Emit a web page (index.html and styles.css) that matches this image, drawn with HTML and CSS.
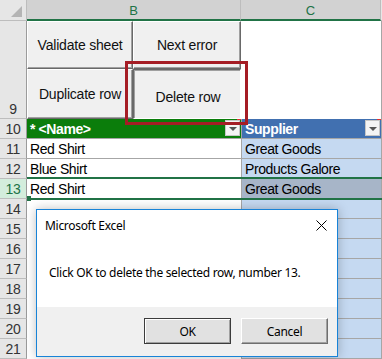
FILE: index.html
```html
<!DOCTYPE html>
<html lang="en">
<head>
  <meta charset="UTF-8" />
  <title>Delete row</title>
  <link rel="stylesheet" href="styles.css">
</head>
<body>
  <div class="screen">
    <div class="sheet">
      <!-- column headers -->
      <div class="corner"><span class="corner-tri"></span></div>
      <div class="col-head sel">B</div>
      <div class="col-head sel">C</div>
      <div class="col-head rest"></div>

      <!-- row 9 : macro buttons -->
      <div class="row-head tall">9</div>
      <div class="cell buttons">
        <div class="xl-btn">Validate sheet</div>
        <div class="xl-btn">Next error</div>
        <div class="xl-btn">Duplicate row</div>
        <div class="xl-btn pressed">Delete row</div>
      </div>
      <div class="cell plain"></div>
      <div class="cell rest"></div>

      <!-- row 10 : table header -->
      <div class="row-head">10</div>
      <div class="cell th green">* &lt;Name&gt;<span class="drop"></span></div>
      <div class="cell th blue">Supplier<span class="drop"></span></div>
      <div class="cell rest"></div>

      <div class="row-head">11</div>
      <div class="cell td">Red Shirt</div>
      <div class="cell td band">Great Goods</div>
      <div class="cell rest"></div>

      <div class="row-head">12</div>
      <div class="cell td">Blue Shirt</div>
      <div class="cell td band">Products Galore</div>
      <div class="cell rest"></div>

      <div class="row-head active">13</div>
      <div class="cell td">Red Shirt</div>
      <div class="cell td band picked">Great Goods</div>
      <div class="cell rest"></div>

      <div class="row-head">14</div><div class="cell empty"></div><div class="cell band"></div><div class="cell rest"></div>
      <div class="row-head">15</div><div class="cell empty"></div><div class="cell band"></div><div class="cell rest"></div>
      <div class="row-head">16</div><div class="cell empty"></div><div class="cell band"></div><div class="cell rest"></div>
      <div class="row-head">17</div><div class="cell empty"></div><div class="cell band"></div><div class="cell rest"></div>
      <div class="row-head">18</div><div class="cell empty"></div><div class="cell band"></div><div class="cell rest"></div>
      <div class="row-head">19</div><div class="cell empty"></div><div class="cell band"></div><div class="cell rest"></div>
      <div class="row-head">20</div><div class="cell empty"></div><div class="cell band"></div><div class="cell rest"></div>
      <div class="row-head">21</div><div class="cell empty"></div><div class="cell band"></div><div class="cell rest"></div>
    </div>

    <!-- selection of row 13 -->
    <div class="selection"><span class="fill-handle"></span></div>

    <!-- callout round the pressed button -->
    <div class="callout"></div>

    <div class="dialog">
      <div class="dialog-title">
        Microsoft Excel
        <svg class="close" width="11" height="11" viewBox="0 0 11 11">
          <path d="M0.5 0.5 L10.5 10.5 M10.5 0.5 L0.5 10.5" stroke="#000" stroke-width="1" fill="none"/>
        </svg>
      </div>
      <div class="dialog-msg">Click OK to delete the selected row, number 13.</div>
      <div class="dialog-foot">
        <div class="dlg-btn default">OK</div>
        <div class="dlg-btn">Cancel</div>
      </div>
    </div>
  </div>
</body>
</html>
```

FILE: styles.css
```css
body {
  margin: 0;
  background: #ffffff;
  font-family: "Liberation Sans", Arial, sans-serif;
}

.screen {
  position: relative;
  width: 382px;
  height: 359px;
  overflow: hidden;
}

.sheet {
  display: grid;
  grid-template-columns: 27px 214px 140px 1fr;
  grid-template-rows: 21px 98px repeat(12, 20px);
}

/* headers */
.corner {
  position: relative;
  background: #e6e6e6;
  border-right: 1px solid #bdbdbd;
  border-bottom: 1px solid #bdbdbd;
  box-sizing: border-box;
}

.corner-tri {
  position: absolute;
  right: 4px;
  bottom: 3px;
  width: 0;
  height: 0;
  border-left: 11px solid transparent;
  border-bottom: 11px solid #b4b4b4;
}

.col-head {
  display: flex;
  align-items: center;
  justify-content: center;
  font-size: 13px;
  color: #444;
  background: #e6e6e6;
  border-right: 1px solid #bdbdbd;
  box-sizing: border-box;
}

.col-head.sel {
  background: #d2d2d2;
  color: #217346;
  border-bottom: 2px solid #217346;
  padding-top: 1px;
}

.col-head.rest {
  border-bottom: 1px solid #bdbdbd;
  border-right: none;
}

.row-head {
  display: flex;
  align-items: center;
  justify-content: center;
  font-size: 14px;
  color: #333;
  background: #e6e6e6;
  border-right: 1px solid #9b9b9b;
  border-bottom: 1px solid #bdbdbd;
  box-sizing: border-box;
  letter-spacing: -0.3px;
}

.row-head.tall {
  align-items: flex-end;
  padding-bottom: 1px;
}

.row-head.active {
  background: #d3eddc;
  color: #217346;
}

/* cells */
.cell {
  box-sizing: border-box;
  font-size: 14px;
  letter-spacing: -0.4px;
  color: #000;
  white-space: nowrap;
}

.cell.rest {
  background: #f2f2f2;
  border-left: 1px solid #a6a6a6;
}

.cell.plain {
  background: #fff;
}

.td {
  display: flex;
  align-items: center;
  padding-left: 3px;
  border-bottom: 1px solid #a6a6a6;
  background: #fff;
}

.band {
  background: #c5d9f1;
  border-left: 1px solid #a6a6a6;
  border-bottom: 1px solid #a6a6a6;
}

.picked {
  background: #a7b5c8;
}

.empty {
  background: #fff;
}

.th {
  position: relative;
  display: flex;
  align-items: center;
  padding-left: 3px;
  color: #fff;
  font-weight: bold;
  border-bottom: 1px solid #a6a6a6;
}

.th.green {
  background: #0b7d0b;
}

.th.blue {
  background: #4170b0;
  border-left: 1px solid #a6a6a6;
}

.drop {
  position: absolute;
  right: 1px;
  top: 1px;
  width: 15px;
  height: 16px;
  box-sizing: border-box;
  background: #f4f4f4;
  border: 1px solid #c6c6c6;
}

.drop::after {
  content: "";
  position: absolute;
  left: 3px;
  top: 6px;
  border-left: 4px solid transparent;
  border-right: 4px solid transparent;
  border-top: 4px solid #555;
}

.drop::before {
  content: "";
  position: absolute;
  right: -2px;
  top: -2px;
  width: 4px;
  height: 1px;
  background: #e03030;
}

/* macro buttons */
.buttons {
  display: grid;
  grid-template-columns: 106px 108px;
  grid-template-rows: 48px 50px;
  background: #fff;
}

.xl-btn {
  display: flex;
  align-items: center;
  justify-content: center;
  font-size: 14px;
  letter-spacing: -0.2px;
  color: #111;
  background: #f0f0f0;
  border: 1px solid;
  border-color: #ffffff #696969 #696969 #ffffff;
  box-shadow: inset -1px -1px 0 #a0a0a0;
}

.xl-btn.pressed {
  border-color: #696969 #ffffff #ffffff #696969;
  box-shadow: inset 1px 1px 0 #a0a0a0;
  padding-top: 5px;
  padding-left: 2px;
}

/* selection */
.selection {
  position: absolute;
  left: 27px;
  top: 177px;
  width: 360px;
  height: 23px;
  border-top: 2px solid #217346;
  border-bottom: 2px solid #217346;
  box-sizing: border-box;
}

.fill-handle {
  position: absolute;
  left: 0;
  bottom: -3px;
  width: 4px;
  height: 5px;
  background: #217346;
}

.callout {
  position: absolute;
  left: 125px;
  top: 61px;
  width: 123px;
  height: 64px;
  box-sizing: border-box;
  border: 3px solid #a51d25;
}

/* message box */
.dialog {
  position: absolute;
  left: 36px;
  top: 209px;
  width: 302px;
  height: 148px;
  box-sizing: border-box;
  border: 1px solid #1883d7;
  background: #fff;
  box-shadow: 0 0 10px rgba(0, 0, 0, 0.25);
  display: flex;
  flex-direction: column;
  font-family: "Noto Sans", "Liberation Sans", sans-serif;
  font-size: 12px;
  letter-spacing: -0.3px;
  color: #000;
}

.dialog-title {
  height: 30px;
  display: flex;
  align-items: center;
  justify-content: space-between;
  padding: 0 10px 0 8px;
}

.dialog-msg {
  flex: 1;
  display: flex;
  align-items: center;
  padding-left: 12px;
  padding-bottom: 2px;
}

.dialog-foot {
  height: 49px;
  background: #f0f0f0;
  display: flex;
  justify-content: flex-end;
  align-items: flex-start;
  gap: 10px;
  padding: 11px 9px 0 0;
  box-sizing: border-box;
}

.dlg-btn {
  width: 87px;
  height: 26px;
  box-sizing: border-box;
  display: flex;
  align-items: center;
  justify-content: center;
  background: #e1e1e1;
  border: 1px solid;
  border-color: #fff #6e6e6e #6e6e6e #fff;
  box-shadow: inset -1px -1px 0 #a0a0a0;
}

.dlg-btn.default {
  border-color: #3c3c3c;
  box-shadow: inset 1px 1px 0 #fff, inset -1px -1px 0 #a0a0a0;
}
```
